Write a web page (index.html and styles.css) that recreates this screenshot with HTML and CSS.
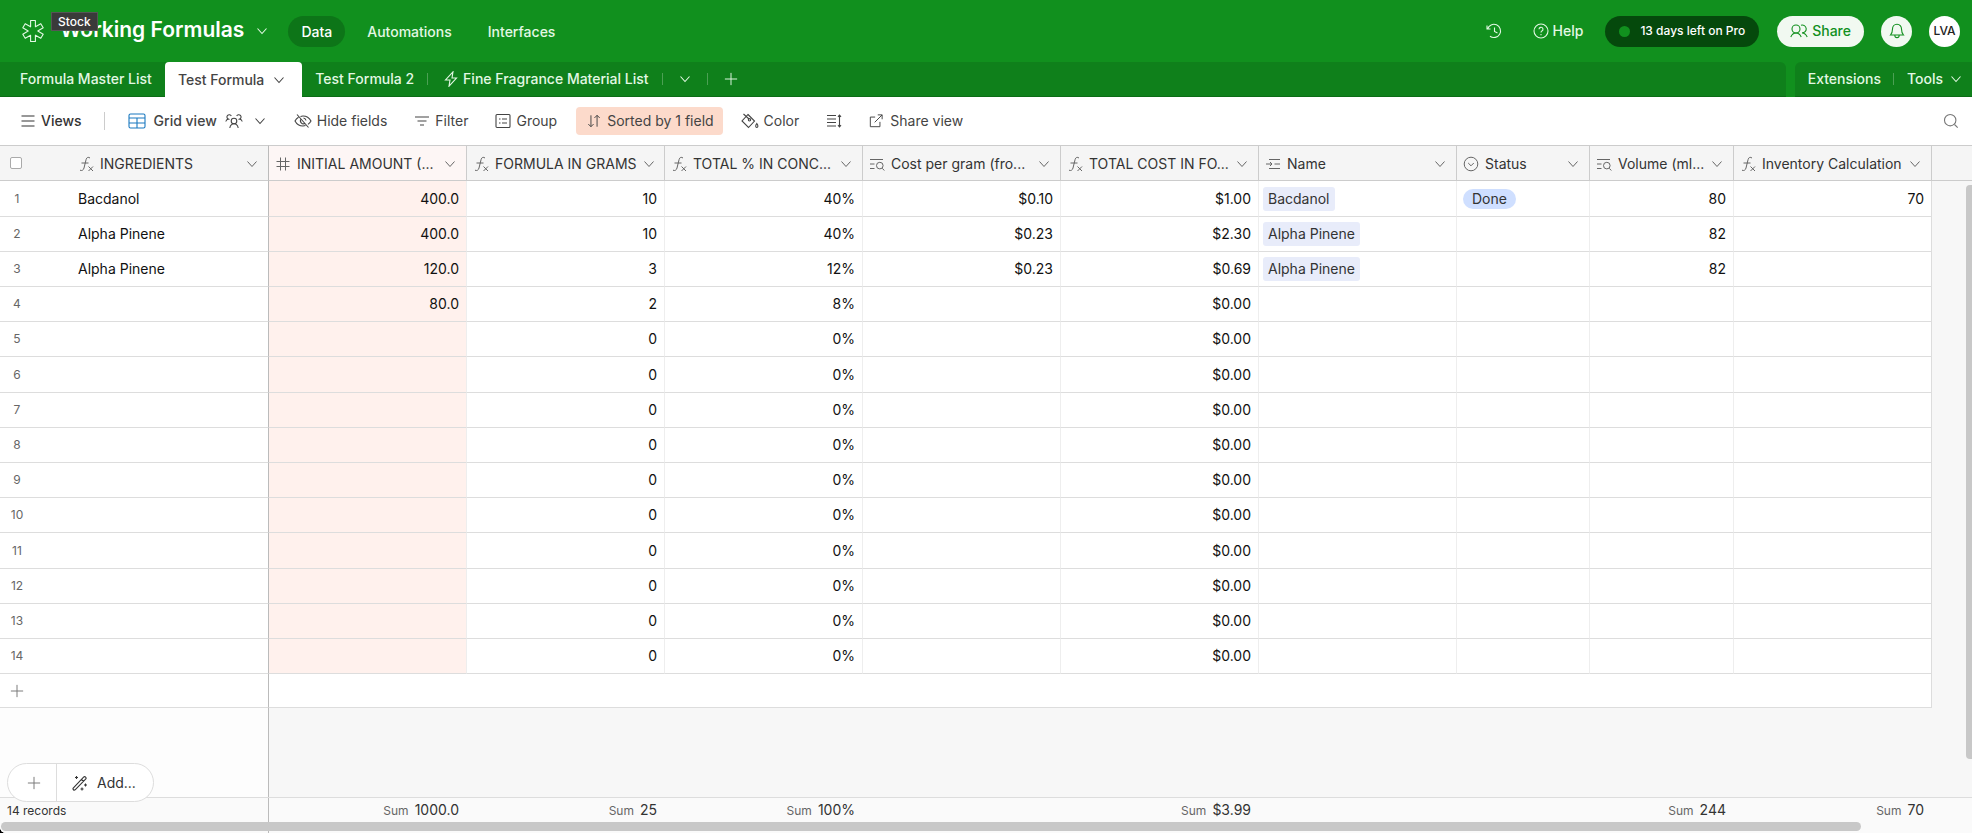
FILE: index.html
```html
<!DOCTYPE html>
<html lang="en">
<head>
<meta charset="utf-8">
<title>Working Formulas</title>
<link rel="stylesheet" href="styles.css">
</head>
<body>
<svg class="sprite" aria-hidden="true">
  <symbol id="chev" viewBox="0 0 12 12"><path d="M1.500 3.500 6 8.500l4.500-5"/></symbol>
  <symbol id="plus" viewBox="0 0 16 16"><path d="M8 1v14M1 8h14"/></symbol>
  <symbol id="fx" viewBox="0 0 16 16"><path d="M12 2C10.500.8 8.600 1.200 8.100 3.500L6 12C5.500 14.200 3.800 15 2 14.200M3.500 7h7M10.500 10.500l4.500 4.500M15 10.500l-4.500 4.500"/></symbol>
  <symbol id="hash" viewBox="0 0 16 16"><path d="M5.500 1.500v13M10.500 1.500v13M1.500 5.500h13M1.500 10.500h13"/></symbol>
  <symbol id="lookup" viewBox="0 0 16 16"><path d="M1 3.500h13M1 8h4.500M1 12.500h4.500M13.300 12.300l2 2.200"/><circle cx="10.800" cy="9.600" r="3.300"/></symbol>
  <symbol id="link" viewBox="0 0 16 16"><path d="M4 3.500h11M9.500 8H15M4 12.500h11M1 8h6M5 6l2 2-2 2"/></symbol>
  <symbol id="select" viewBox="0 0 16 16"><circle cx="8" cy="8" r="6.800"/><path d="M5.200 7 8 9.800 10.800 7"/></symbol>
</svg>
<div class="app">
  <header class="topbar">
    <svg class="logo" viewBox="0 0 24 24"><path d="M9.600 1.500h4.800v6.300l5.400-3.100 2.400 4.100L16.800 12l5.400 3.200-2.400 4.100-5.400-3.100v6.300H9.600v-6.300l-5.400 3.100-2.400-4.100L7.200 12 1.800 8.800l2.400-4.100 5.400 3.100z"/></svg>
    <h1 class="title">Working Formulas<span class="tooltip" role="tooltip">Stock</span></h1>
    <svg class="i12 title-chev"><use href="#chev"/></svg>
    <nav class="nav">
      <a href="#data" class="active">Data</a>
      <a href="#automations">Automations</a>
      <a href="#interfaces">Interfaces</a>
    </nav>
    <div class="actions">
      <button class="plain" aria-label="History"><svg class="i16" viewBox="0 0 16 16"><path d="M1 2.500V6h3.500M1.600 6A6.600 6.600 0 1 1 4 13.200M8.500 4.500V8.500l3 1.500"/></svg></button>
      <button class="plain help"><svg class="i16" viewBox="0 0 16 16"><circle cx="8" cy="8" r="7"/><path d="M6 6.300a2 2 0 1 1 2.900 1.800c-.6.300-.9.600-.9 1.300M8 11v1.200"/></svg>Help</button>
      <button class="trial"><span class="dot"></span>13 days left on Pro</button>
      <button class="share"><svg class="i18" viewBox="0 0 18 16"><circle cx="6" cy="6" r="4"/><path d="M.8 14c1-2.500 3-4 5.200-4s4.200 1.500 5.200 4M11 2.200A4 4 0 1 1 12 10c2.200 0 4 1.300 5.200 4"/></svg>Share</button>
      <button class="round" aria-label="Notifications"><svg class="i16" viewBox="0 0 16 16"><path d="M8 1.200C5.300 1.200 3.500 3.200 3.500 6c0 3-.8 4.600-2 6h13c-1.200-1.400-2-3-2-6 0-2.800-1.800-4.800-4.500-4.800zM5.800 12.200c0 3.200 4.400 3.200 4.400 0"/></svg></button>
      <button class="round avatar">LVA</button>
    </div>
  </header>

  <div class="tabbar">
    <nav class="tabs">
      <a href="#t1" class="tab first">Formula Master List</a>
      <a href="#t2" class="tab current">Test Formula <svg class="i12"><use href="#chev"/></svg></a>
      <a href="#t3" class="tab">Test Formula 2</a>
      <span class="sep"></span>
      <a href="#t4" class="tab bolt"><svg class="i16" viewBox="0 0 16 16"><path d="M10 .8 2.500 9H7L6 15.200 13.500 7H9z"/></svg>Fine Fragrance Material List</a>
      <span class="sep"></span>
      <button class="tab-btn" aria-label="All tables"><svg class="i12"><use href="#chev"/></svg></button>
      <span class="sep"></span>
      <button class="tab-btn add" aria-label="Add table"><svg class="i14"><use href="#plus"/></svg></button>
    </nav>
    <div class="side-tabs">
      <button>Extensions</button><span class="sep"></span><button>Tools <svg class="i12"><use href="#chev"/></svg></button>
    </div>
  </div>

  <div class="toolbar">
    <button class="tool views"><svg class="i16" viewBox="0 0 16 16"><path d="M1.500 3h13M1.500 8h13M1.500 13h13"/></svg>Views</button>
    <span class="vr"></span>
    <button class="tool gridview"><svg class="i18 blue" viewBox="0 0 18 16"><rect x="1" y="1" width="16" height="14" rx="1.500"/><path d="M1 5h16M1 10h16M9 5v10"/></svg><span>Grid view</span><svg class="i18" viewBox="0 0 18 16"><circle cx="9" cy="8" r="2.800"/><path d="M4.800 15c.5-2.500 2.200-4.200 4.200-4.200s3.700 1.700 4.200 4.200M.8 8.500c.3-1.400 1.200-2.200 2.500-2.400A2.300 2.300 0 1 1 6.300 3M17.200 8.500c-.3-1.400-1.200-2.200-2.500-2.400A2.300 2.300 0 1 0 11.700 3"/></svg><svg class="i12"><use href="#chev"/></svg></button>
    <button class="tool hide"><svg class="i18" viewBox="0 0 18 16"><path d="M3 1.500l11.500 13M6.500 3.400C7.300 3.100 8.100 3 9 3c3.500 0 6.500 2.200 8 5-.7 1.300-1.700 2.500-3 3.400M11.500 12.600c-.8.300-1.600.4-2.500.4-3.500 0-6.500-2.200-8-5 .8-1.500 2-2.800 3.500-3.800M7 6a3 3 0 0 0 4 4.300M9.500 5c1.400.2 2.300 1.200 2.500 2.500"/></svg>Hide fields</button>
    <button class="tool"><svg class="i16" viewBox="0 0 16 16"><path d="M1 4h14M3.500 8h9M6 12h4"/></svg>Filter</button>
    <button class="tool"><svg class="i16" viewBox="0 0 16 16"><rect x="1" y="1.500" width="14" height="13" rx="1"/><path d="M4 6h1.500M7 6h5M4 10h1.500M7 10h5"/></svg>Group</button>
    <button class="tool sorted"><svg class="i14" viewBox="0 0 16 16"><path d="M4.500 1.500v13M1.500 11.500l3 3 3-3M11.500 14.500v-13M8.500 4.500l3-3 3 3"/></svg>Sorted by 1 field</button>
    <button class="tool"><svg class="i18" viewBox="0 0 18 16"><path d="M2.500 1 8 6M7 1.500 13.500 8 7.500 14.500 1 8z"/><circle cx="8.500" cy="6.800" r="1.200"/><path d="M15.800 10.500c1.600 2 1.300 4 0 4s-1.600-2 0-4z"/></svg>Color</button>
    <button class="tool height" aria-label="Row height"><svg class="i16" viewBox="0 0 16 16"><path d="M1 2.500h9M1 6h9M1 9.500h9M1 13h9M13.500 2v12M12 3.800l1.500-1.800L15 3.800M12 12.200l1.500 1.800 1.500-1.800"/></svg></button>
    <button class="tool share-view"><svg class="i14" viewBox="0 0 16 16"><path d="M7 3.500H1.500v11h11V9M6.500 9.500 15 1M10 1h5v5"/></svg>Share view</button>
    <button class="tool search" aria-label="Search"><svg class="i16" viewBox="0 0 16 16"><circle cx="7.200" cy="7.200" r="5.700"/><path d="M11.500 11.500l3.200 3.200"/></svg></button>
  </div>

  <main class="sheet">
    <table class="grid">
      <colgroup><col class="c-num"><col class="c-name"><col class="c"><col class="c"><col class="c"><col class="c"><col class="c"><col class="c"><col class="c-status"><col class="c-vol"><col class="c"><col></colgroup>
      <thead>
        <tr>
          <th class="pick"><input type="checkbox" aria-label="Select all rows"></th>
          <th class="name"><div class="field"><svg class="i16"><use href="#fx"/></svg><span>INGREDIENTS</span><svg class="i12"><use href="#chev"/></svg></div></th>
          <th class="hot"><div class="field"><svg class="i16"><use href="#hash"/></svg><span>INITIAL AMOUNT (...</span><svg class="i12"><use href="#chev"/></svg></div></th>
          <th><div class="field"><svg class="i16"><use href="#fx"/></svg><span>FORMULA IN GRAMS</span><svg class="i12"><use href="#chev"/></svg></div></th>
          <th><div class="field"><svg class="i16"><use href="#fx"/></svg><span>TOTAL % IN CONC...</span><svg class="i12"><use href="#chev"/></svg></div></th>
          <th><div class="field"><svg class="i16"><use href="#lookup"/></svg><span>Cost per gram (fro...</span><svg class="i12"><use href="#chev"/></svg></div></th>
          <th><div class="field"><svg class="i16"><use href="#fx"/></svg><span>TOTAL COST IN FO...</span><svg class="i12"><use href="#chev"/></svg></div></th>
          <th><div class="field"><svg class="i16"><use href="#link"/></svg><span>Name</span><svg class="i12"><use href="#chev"/></svg></div></th>
          <th><div class="field"><svg class="i16"><use href="#select"/></svg><span>Status</span><svg class="i12"><use href="#chev"/></svg></div></th>
          <th><div class="field"><svg class="i16"><use href="#lookup"/></svg><span>Volume (ml...</span><svg class="i12"><use href="#chev"/></svg></div></th>
          <th><div class="field"><svg class="i16"><use href="#fx"/></svg><span>Inventory Calculation</span><svg class="i12"><use href="#chev"/></svg></div></th>
          <th class="rest"></th>
        </tr>
      </thead>
      <tbody>
        <tr><td>1</td><td>Bacdanol</td><td>400.0</td><td>10</td><td>40%</td><td>$0.10</td><td>$1.00</td><td><span class="chip">Bacdanol</span></td><td><span class="pill">Done</span></td><td>80</td><td>70</td><td></td></tr>
        <tr><td>2</td><td>Alpha Pinene</td><td>400.0</td><td>10</td><td>40%</td><td>$0.23</td><td>$2.30</td><td><span class="chip">Alpha Pinene</span></td><td></td><td>82</td><td></td><td></td></tr>
        <tr><td>3</td><td>Alpha Pinene</td><td>120.0</td><td>3</td><td>12%</td><td>$0.23</td><td>$0.69</td><td><span class="chip">Alpha Pinene</span></td><td></td><td>82</td><td></td><td></td></tr>
        <tr><td>4</td><td></td><td>80.0</td><td>2</td><td>8%</td><td></td><td>$0.00</td><td></td><td></td><td></td><td></td><td></td></tr>
        <tr><td>5</td><td></td><td></td><td>0</td><td>0%</td><td></td><td>$0.00</td><td></td><td></td><td></td><td></td><td></td></tr>
        <tr><td>6</td><td></td><td></td><td>0</td><td>0%</td><td></td><td>$0.00</td><td></td><td></td><td></td><td></td><td></td></tr>
        <tr><td>7</td><td></td><td></td><td>0</td><td>0%</td><td></td><td>$0.00</td><td></td><td></td><td></td><td></td><td></td></tr>
        <tr><td>8</td><td></td><td></td><td>0</td><td>0%</td><td></td><td>$0.00</td><td></td><td></td><td></td><td></td><td></td></tr>
        <tr><td>9</td><td></td><td></td><td>0</td><td>0%</td><td></td><td>$0.00</td><td></td><td></td><td></td><td></td><td></td></tr>
        <tr><td>10</td><td></td><td></td><td>0</td><td>0%</td><td></td><td>$0.00</td><td></td><td></td><td></td><td></td><td></td></tr>
        <tr><td>11</td><td></td><td></td><td>0</td><td>0%</td><td></td><td>$0.00</td><td></td><td></td><td></td><td></td><td></td></tr>
        <tr><td>12</td><td></td><td></td><td>0</td><td>0%</td><td></td><td>$0.00</td><td></td><td></td><td></td><td></td><td></td></tr>
        <tr><td>13</td><td></td><td></td><td>0</td><td>0%</td><td></td><td>$0.00</td><td></td><td></td><td></td><td></td><td></td></tr>
        <tr><td>14</td><td></td><td></td><td>0</td><td>0%</td><td></td><td>$0.00</td><td></td><td></td><td></td><td></td><td></td></tr>
      </tbody>
      <tfoot>
        <tr><td class="new"><button aria-label="Add record"><svg class="i14"><use href="#plus"/></svg></button></td><td class="new-name"></td><td class="new-rest" colspan="9"></td><td class="rest"></td></tr>
      </tfoot>
    </table>
    <div class="blank"><div class="blank-left"></div></div>
    <div class="summary">
      <div class="records">14 records</div>
      <div><small>Sum</small>1000.0</div>
      <div><small>Sum</small>25</div>
      <div><small>Sum</small>100%</div>
      <div></div>
      <div><small>Sum</small>$3.99</div>
      <div></div>
      <div></div>
      <div><small>Sum</small>244</div>
      <div><small>Sum</small>70</div>
    </div>
    <div class="adder">
      <button class="adder-plus" aria-label="Add record"><svg class="i14"><use href="#plus"/></svg></button>
      <button class="adder-more"><svg class="i16" viewBox="0 0 16 16"><path d="M1.200 13.100 11.600 2.200a1.300 1.300 0 0 1 2 2L3.100 14.800a1.300 1.300 0 0 1-1.900-1.700zM9.500 4.500l2 2M4.500 1v3M3 2.500h3M13.500 8.500v3M12 10h3M10 12.500v3M8.500 14h3"/></svg>Add...</button>
    </div>
    <div class="vbar"></div>
    <div class="hbar"></div>
  </main>
</div>
</body>
</html>
```
FILE: styles.css
```css
* { box-sizing: border-box; }
html { background: #000; }
body {
  margin: 0;
  font: 14px/20px Inter, "Liberation Sans", sans-serif;
  color: #333;
}
button {
  margin: 0;
  padding: 0;
  border: 0;
  background: none;
  font: inherit;
  color: inherit;
  display: flex;
  align-items: center;
}
a { color: inherit; text-decoration: none; }
svg { fill: none; stroke: currentColor; stroke-width: 1.1; flex: none; }
.sprite { display: none; }
.i12 { width: 12px; height: 12px; }
.i14 { width: 14px; height: 14px; }
.i16 { width: 16px; height: 16px; }
.i18 { width: 18px; height: 16px; }

.app {
  height: 100vh;
  display: flex;
  flex-direction: column;
  background: #fff;
  border-bottom-left-radius: 6px;
  overflow: hidden;
}

.topbar {
  height: 62px;
  padding: 0 12px 0 21px;
  display: flex;
  align-items: center;
  background: #11901e;
  color: #e3f8e4;
  font-weight: 500;
}
.logo { width: 24px; height: 24px; stroke-linejoin: round; }
.title {
  position: relative;
  margin: 0 0 0 15px;
  font-size: 21px;
  line-height: 26px;
  padding-bottom: 2px;
  font-weight: 600;
  color: #fff;
  white-space: nowrap;
}
.tooltip {
  position: absolute;
  left: -9px;
  top: -5px;
  padding: 0 6px;
  border: 1px solid #555;
  background: #3a3a3a;
  font-size: 12px;
  line-height: 17px;
  font-weight: 500;
}
.title-chev { margin: 0 20px 0 12px; }
.nav { display: flex; gap: 8px; }
.nav a { padding: 0 13px; line-height: 31px; border-radius: 16px; }
.nav .active { background: #0d7518; color: #fff; }
.nav a + a { padding: 0 14px; }
.actions { margin-left: auto; display: flex; align-items: center; }
.help { margin: 0 22px 0 31px; gap: 4px; }
.trial {
  height: 31px;
  padding: 0 14px;
  gap: 10px;
  border-radius: 16px;
  background: #05490c;
  color: #fff;
  font-size: 12px;
}
.dot { width: 11px; height: 11px; border-radius: 50%; background: #11901e; }
.share {
  height: 31px;
  margin: 0 17px 0 18px;
  padding: 0 13px;
  gap: 4px;
  border-radius: 16px;
  background: #f1f9f1;
  color: #11901e;
}
.round {
  width: 31px;
  height: 31px;
  border-radius: 50%;
  justify-content: center;
  background: #f1f9f1;
  color: #11901e;
}
.avatar { margin-left: 17px; background: #fff; color: #222; font-size: 12px; }

.tabbar {
  height: 35px;
  display: flex;
  gap: 9px;
  background: #11901e;
  color: #e3f8e4;
  font-weight: 500;
}
.tabs, .side-tabs {
  display: flex;
  align-items: center;
  background: #0f801b;
  border-bottom: 1px solid #0c6c16;
}
.tabs { flex: 1; border-top-right-radius: 6px; }
.side-tabs { padding: 0 10px 0 13px; border-top-left-radius: 6px; }
.side-tabs button { gap: 7px; }
.side-tabs .sep { margin: 0 13px 0 12px; }
.tab { padding: 0 13px; line-height: 34px; white-space: nowrap; display: flex; align-items: center; }
.tab.first { padding: 0 13px 0 20px; }
.tab.current {
  height: 35px;
  gap: 9px;
  padding-right: 17px;
  background: #fff;
  color: #444;
  border-radius: 4px 4px 0 0;
  margin-bottom: -1px;
}
.tab.bolt { gap: 4px; padding-left: 15px; }
.sep { width: 1px; height: 12px; background: #4ca054; }
.tab-btn { padding: 0 16px; }

.toolbar {
  height: 48px;
  padding: 0 12px 0 20px;
  display: flex;
  align-items: center;
  color: #444;
}
.tool { gap: 5px; margin-right: 27px; white-space: nowrap; }
.views { margin-right: 22px; font-weight: 500; color: #333; }
.vr { width: 1px; height: 18px; background: #ccc; }
.gridview { margin: 0 28px 0 23px; gap: 8px; font-weight: 500; }
.gridview .i12 { margin-left: 3px; }
.blue { color: #1a79c0; }
.sorted {
  height: 28px;
  margin: 0 18px 0 -8px;
  padding: 0 9px 0 11px;
  border-radius: 4px;
  background: #fcdacb;
  gap: 6px;
}
.share-view { gap: 7px; }
.search { margin: 0 0 0 auto; padding-right: 1px; color: #777; }

.sheet {
  position: relative;
  flex: 1;
  min-height: 0;
  display: flex;
  flex-direction: column;
  background: #f7f7f7;
}
.grid { width: 100%; table-layout: fixed; border-collapse: separate; border-spacing: 0; }
.c-num { width: 72px; }
.c-name { width: 197px; }
.c { width: 198px; }
.c-status { width: 133px; }
.c-vol { width: 144px; }
th, td { padding: 0; text-align: right; white-space: nowrap; }
th {
  height: 36px;
  border: solid #ccc;
  border-width: 1px 1px 1px 0;
  background: #f5f5f5;
  font-weight: 400;
}
th.pick { border-right: 0; text-align: left; }
th.pick input {
  display: block;
  appearance: none;
  width: 12px;
  height: 12px;
  margin: 0 0 0 10px;
  border: 1px solid #aaa;
  border-radius: 2px;
  background: #fff;
}
th.name { border-right-color: #bbb; }
th.hot { background: #fdf6f5; }
th.rest { border-right: 0; }
.field { display: flex; align-items: center; gap: 6px; padding: 2px 10px 0 6px; color: #333; }
.field svg { color: #666; stroke-width: 1; }
.field .i12 { margin-left: auto; }
tbody td {
  height: 35px;
  padding-right: 7px;
  border-bottom: 1px solid #ddd;
  border-right: 1px solid #eee;
  background: #fff;
  line-height: 20px;
  color: #111;
}
tbody tr:nth-child(5n+1) td { height: 36px; }
tbody td:nth-child(1) { padding: 0 38px 0 0; border-right: 0; font-size: 12px; color: #666; text-align: center; }
tbody td:nth-child(2) { padding-left: 6px; text-align: left; border-right-color: #bbb; }
tbody td:nth-child(3) { background: #fff1ed; }
tbody td:nth-child(8) { padding-left: 4px; text-align: left; }
tbody td:nth-child(9) { padding-left: 6px; text-align: left; }
tbody td:nth-child(11) { border-right-color: #ddd; }
tbody td:last-child { background: none; border: 0; }
.chip, .pill { display: inline-block; vertical-align: middle; color: #333; }
.chip { padding: 2px 5px; border-radius: 3px; background: #e8ecfa; }
.pill { padding: 0 9px; border-radius: 10px; background: #cfdfff; }
.new, .new-name, .new-rest { height: 34px; border-bottom: 1px solid #ddd; background: #fff; }
.new button { margin-left: 10px; color: #777; }
.new-name { border-right: 1px solid #bbb; }
.new-rest { border-right: 1px solid #ddd; }
.blank { flex: 1; display: flex; }
.blank-left { width: 269px; border-right: 1px solid #bbb; background: #fdfdfd; }
.summary {
  height: 36px;
  display: grid;
  grid-template-columns: 269px repeat(6, 198px) 133px 144px 198px;
  border-top: 1px solid #ddd;
  background: #fafafa;
  line-height: 24px;
  text-align: right;
}
.summary div { padding-right: 8px; }
.summary .records { padding: 1px 0 0 7px; border-right: 1px solid #bbb; font-size: 12px; text-align: left; }
.summary small { margin-right: 6px; font-size: 12px; color: #666; }
.adder {
  position: absolute;
  left: 7px;
  bottom: 31px;
  height: 39px;
  display: flex;
  border: 1px solid #ddd;
  border-radius: 20px;
  background: #fff;
}
.adder-plus { padding: 0 15px 0 19px; border-right: 1px solid #ddd; color: #777; }
.adder-more { padding: 0 17px 0 15px; gap: 9px; }
.vbar, .hbar { position: absolute; background: #c8c8c8; }
.vbar { right: 0; top: 40px; bottom: 74px; width: 6px; border-radius: 4px 0 0 4px; }
.hbar { left: 1px; right: 111px; bottom: 2px; height: 9px; border-radius: 5px; }
```
